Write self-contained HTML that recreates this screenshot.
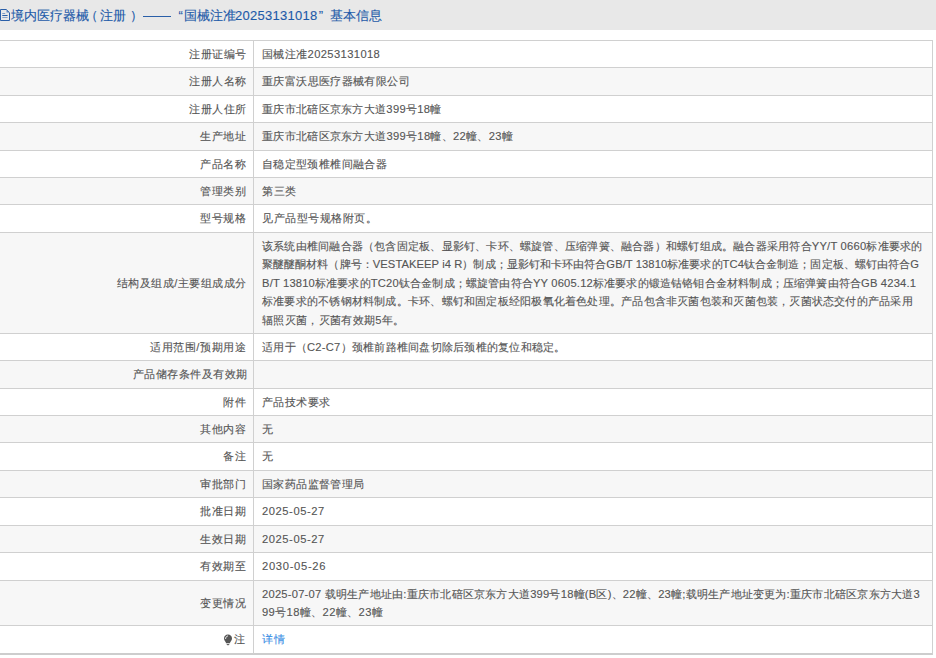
<!DOCTYPE html><html><head><meta charset="utf-8"><style>
*{margin:0;padding:0;box-sizing:border-box}
html,body{width:936px;height:658px;overflow:hidden;background:#fff;font-family:"Liberation Sans",sans-serif;text-spacing-trim:space-all;}
.hd{position:absolute;left:0;top:0;width:936px;height:30px;background:#e8e8e8;}
.t{position:absolute;white-space:nowrap;color:#1d5aa8;-webkit-text-stroke:0.12px #1d5aa8;font-size:13px;line-height:30px;top:1px}
.bg{position:absolute;left:0;width:932px;background:#f7f7f7}
.hl{position:absolute;left:0;width:933px;height:1px;background:#d0d0d0}
.vl{position:absolute;width:1px;background:#d0d0d0}
.lb{position:absolute;white-space:nowrap;font-size:11.2px;color:#555;-webkit-text-stroke:0.12px #555;text-align:right}
.vv{position:absolute;left:262px;white-space:nowrap;font-size:11.2px;color:#555;-webkit-text-stroke:0.12px #555}
a{-webkit-text-stroke:0.12px #3b8fe5}
a{color:#3b8fe5;text-decoration:none}
</style></head><body>
<div class="hd"></div>
<div class="t" id="t0" style="left:11px;letter-spacing:0px">境内医疗器械</div>
<div class="t" id="t1" style="left:84.5px;letter-spacing:0px">（</div>
<div class="t" id="t2" style="left:100px;letter-spacing:0px">注册</div>
<div class="t" id="t3" style="left:129.5px;letter-spacing:0px">）</div>
<div class="t" id="t5" style="left:178.6px;letter-spacing:0px">“</div>
<div class="t" id="t6" style="left:183.5px;letter-spacing:0px">国械注准</div>
<div class="t" id="t7" style="left:235px;letter-spacing:0.27px">20253131018</div>
<div class="t" id="t8" style="left:318.7px;letter-spacing:0px">”</div>
<div class="t" id="t9" style="left:330px;letter-spacing:0px">基本信息</div>
<div style="position:absolute;left:143px;top:16px;width:28px;height:1px;background:#2a5fa8"></div>
<svg style="position:absolute;left:0;top:9px" width="10" height="12" viewBox="0 0 10 12"><path d="M0.5 0.5H6.3L9.5 3.7V11.5H0.5Z" fill="none" stroke="#2a5fa8" stroke-width="1"/><path d="M6.5 0.8V3.5H9.2Z" fill="#5f86c0"/><path d="M2.3 4.5H5.2" stroke="#7d9cc8" stroke-width="1"/><path d="M2.3 6.5H7.6" stroke="#2a5fa8" stroke-width="1"/><path d="M2.3 8.5H7.6" stroke="#8da6c9" stroke-width="1"/></svg>
<div class="bg" style="top:68px;height:27px"></div>
<div class="bg" style="top:123px;height:27px"></div>
<div class="bg" style="top:178px;height:26px"></div>
<div class="bg" style="top:233px;height:100px"></div>
<div class="bg" style="top:361px;height:27px"></div>
<div class="bg" style="top:416px;height:26px"></div>
<div class="bg" style="top:471px;height:26px"></div>
<div class="bg" style="top:526px;height:26px"></div>
<div class="bg" style="top:581px;height:44px"></div>
<div class="hl" style="top:40px"></div>
<div class="hl" style="top:67px"></div>
<div class="hl" style="top:95px"></div>
<div class="hl" style="top:122px"></div>
<div class="hl" style="top:150px"></div>
<div class="hl" style="top:177px"></div>
<div class="hl" style="top:204px"></div>
<div class="hl" style="top:232px"></div>
<div class="hl" style="top:333px"></div>
<div class="hl" style="top:360px"></div>
<div class="hl" style="top:388px"></div>
<div class="hl" style="top:415px"></div>
<div class="hl" style="top:442px"></div>
<div class="hl" style="top:470px"></div>
<div class="hl" style="top:497px"></div>
<div class="hl" style="top:525px"></div>
<div class="hl" style="top:552px"></div>
<div class="hl" style="top:580px"></div>
<div class="hl" style="top:625px"></div>
<div class="hl" style="top:653px;height:2px;background:#cdcdcd"></div>
<div class="vl" style="left:253px;top:40px;height:614px"></div>
<div class="vl" style="left:932px;top:40px;height:615px"></div>
<div class="lb" id="l0" style="top:44.80px;line-height:18.4px;left:189px;letter-spacing:0.500px">注册证编号</div>
<div class="vv" id="v0_0" style="top:44.80px;line-height:18.4px;letter-spacing:0.386px">国械注准20253131018</div>
<div class="lb" id="l1" style="top:72.30px;line-height:18.4px;left:189px;letter-spacing:0.500px">注册人名称</div>
<div class="vv" id="v1_0" style="top:72.30px;line-height:18.4px;letter-spacing:0.383px">重庆富沃思医疗器械有限公司</div>
<div class="lb" id="l2" style="top:99.80px;line-height:18.4px;left:189px;letter-spacing:0.500px">注册人住所</div>
<div class="vv" id="v2_0" style="top:99.80px;line-height:18.4px;letter-spacing:0.306px">重庆市北碚区京东方大道399号18幢</div>
<div class="lb" id="l3" style="top:127.30px;line-height:18.4px;left:200px;letter-spacing:0.500px">生产地址</div>
<div class="vv" id="v3_0" style="top:127.30px;line-height:18.4px;letter-spacing:0.312px">重庆市北碚区京东方大道399号18幢、22幢、23幢</div>
<div class="lb" id="l4" style="top:154.80px;line-height:18.4px;left:200px;letter-spacing:0.500px">产品名称</div>
<div class="vv" id="v4_0" style="top:154.80px;line-height:18.4px;letter-spacing:0.360px">自稳定型颈椎椎间融合器</div>
<div class="lb" id="l5" style="top:181.80px;line-height:18.4px;left:200px;letter-spacing:0.500px">管理类别</div>
<div class="vv" id="v5_0" style="top:181.80px;line-height:18.4px;letter-spacing:0.500px">第三类</div>
<div class="lb" id="l6" style="top:209.30px;line-height:18.4px;left:200px;letter-spacing:0.500px">型号规格</div>
<div class="vv" id="v6_0" style="top:209.30px;line-height:18.4px;letter-spacing:0.511px">见产品型号规格附页。</div>
<div class="lb" id="l7" style="top:273.80px;line-height:18.4px;left:117px;letter-spacing:0.470px">结构及组成/主要组成成分</div>
<div class="vv" id="v7_0" style="top:237.00px;line-height:18.4px;letter-spacing:0.219px">该系统由椎间融合器（包含固定板、显影钉、卡环、螺旋管、压缩弹簧、融合器）和螺钉组成。融合器采用符合YY/T 0660标准要求的</div>
<div class="vv" id="v7_1" style="top:255.40px;line-height:18.4px;letter-spacing:0.077px">聚醚醚酮材料（牌号：VESTAKEEP i4 R）制成；显影钉和卡环由符合GB/T 13810标准要求的TC4钛合金制造；固定板、螺钉由符合G</div>
<div class="vv" id="v7_2" style="top:273.80px;line-height:18.4px;letter-spacing:0.172px">B/T 13810标准要求的TC20钛合金制成；螺旋管由符合YY 0605.12标准要求的锻造钴铬钼合金材料制成；压缩弹簧由符合GB 4234.1</div>
<div class="vv" id="v7_3" style="top:292.20px;line-height:18.4px;letter-spacing:0.221px">标准要求的不锈钢材料制成。卡环、螺钉和固定板经阳极氧化着色处理。产品包含非灭菌包装和灭菌包装，灭菌状态交付的产品采用</div>
<div class="vv" id="v7_4" style="top:310.60px;line-height:18.4px;letter-spacing:0.333px">辐照灭菌，灭菌有效期5年。</div>
<div class="lb" id="l8" style="top:337.80px;line-height:18.4px;left:150px;letter-spacing:0.570px">适用范围/预期用途</div>
<div class="vv" id="v8_0" style="top:337.80px;line-height:18.4px;letter-spacing:0.250px">适用于（C2-C7）颈椎前路椎间盘切除后颈椎的复位和稳定。</div>
<div class="lb" id="l9" style="top:365.30px;line-height:18.4px;left:133px;letter-spacing:0.490px">产品储存条件及有效期</div>
<div class="lb" id="l10" style="top:392.80px;line-height:18.4px;left:223px;letter-spacing:1.000px">附件</div>
<div class="vv" id="v10_0" style="top:392.80px;line-height:18.4px;letter-spacing:0.440px">产品技术要求</div>
<div class="lb" id="l11" style="top:419.80px;line-height:18.4px;left:200px;letter-spacing:0.500px">其他内容</div>
<div class="vv" id="v11_0" style="top:419.80px;line-height:18.4px;letter-spacing:0.000px">无</div>
<div class="lb" id="l12" style="top:447.30px;line-height:18.4px;left:223px;letter-spacing:1.000px">备注</div>
<div class="vv" id="v12_0" style="top:447.30px;line-height:18.4px;letter-spacing:0.000px">无</div>
<div class="lb" id="l13" style="top:474.80px;line-height:18.4px;left:200px;letter-spacing:0.500px">审批部门</div>
<div class="vv" id="v13_0" style="top:474.80px;line-height:18.4px;letter-spacing:0.375px">国家药品监督管理局</div>
<div class="lb" id="l14" style="top:502.30px;line-height:18.4px;left:200px;letter-spacing:0.500px">批准日期</div>
<div class="vv" id="v14_0" style="top:502.30px;line-height:18.4px;letter-spacing:0.556px">2025-05-27</div>
<div class="lb" id="l15" style="top:529.80px;line-height:18.4px;left:200px;letter-spacing:0.500px">生效日期</div>
<div class="vv" id="v15_0" style="top:529.80px;line-height:18.4px;letter-spacing:0.556px">2025-05-27</div>
<div class="lb" id="l16" style="top:557.30px;line-height:18.4px;left:200px;letter-spacing:0.500px">有效期至</div>
<div class="vv" id="v16_0" style="top:557.30px;line-height:18.4px;letter-spacing:0.689px">2030-05-26</div>
<div class="lb" id="l17" style="top:593.80px;line-height:18.4px;left:200px;letter-spacing:0.500px">变更情况</div>
<div class="vv" id="v17_0" style="top:584.60px;line-height:18.4px;letter-spacing:0.223px">2025-07-07 载明生产地址由:重庆市北碚区京东方大道399号18幢(B区)、22幢、23幢;载明生产地址变更为:重庆市北碚区京东方大道3</div>
<div class="vv" id="v17_1" style="top:603.00px;line-height:18.4px;letter-spacing:0.385px">99号18幢、22幢、23幢</div>
<div class="lb" id="l18" style="top:630.30px;line-height:18.4px;left:234px;letter-spacing:0.000px">注</div>
<div class="vv" id="v18_0" style="top:630.30px;line-height:18.4px;letter-spacing:0.800px"><a>详情</a></div>
<svg style="position:absolute;left:223px;top:634px" width="10" height="12" viewBox="0 0 10 12"><path d="M5 0.6C7.4 0.6 9 2.3 9 4.5C9 6.3 7.6 7.3 7.1 8.6V9.2H2.9V8.6C2.4 7.3 1 6.3 1 4.5C1 2.3 2.6 0.6 5 0.6Z" fill="#555"/><path d="M3.6 10H6.4V10.6L5.6 11.3H4.4L3.6 10.6Z" fill="#666"/><path d="M2.6 4.6C2.6 3.2 3.4 2.3 4.6 2" stroke="#fff" stroke-width="0.9" fill="none" stroke-linecap="round"/></svg>
</body></html>
